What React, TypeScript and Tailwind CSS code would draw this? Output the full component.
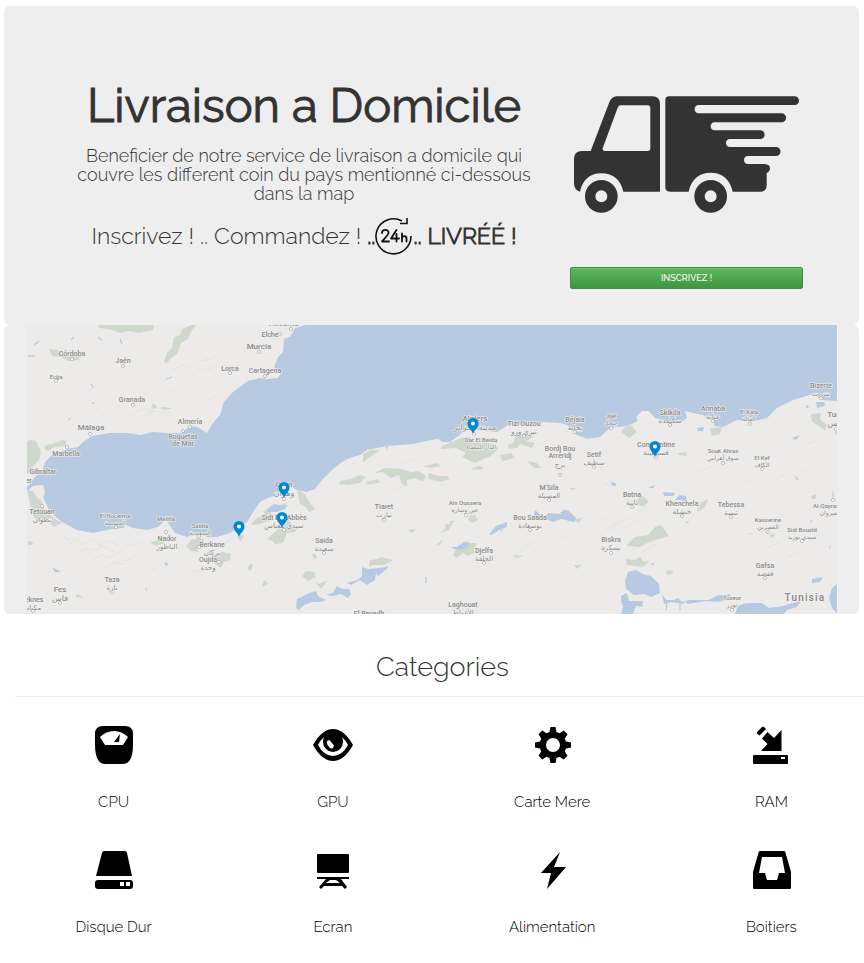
import type { ReactNode } from "react";

const MAP_FONT = "font-['Roboto','DejaVu_Sans',sans-serif]";

type Place = { x: number; y: number; name: string; ar?: string; size?: number; dot?: [number, number]; second?: string };

const places: Place[] = [
  { x: 284, y: 326, name: "Alicante", size: 8, dot: [291, 329] },
  { x: 270, y: 337, name: "Elche", dot: [280, 334] },
  { x: 259, y: 349, name: "Murcia", size: 8, dot: [259, 352] },
  { x: 72, y: 356, name: "Córdoba", dot: [72, 359] },
  { x: 123, y: 363, name: "Jaén", dot: [123, 366] },
  { x: 56, y: 379, name: "Ecija", size: 6, dot: [56, 381] },
  { x: 230, y: 371, name: "Lorca", dot: [230, 373] },
  { x: 265, y: 373, name: "Cartagena", dot: [265, 376] },
  { x: 132, y: 402, name: "Granada", dot: [133, 405] },
  { x: 91, y: 430, name: "Málaga", size: 8, dot: [90, 434] },
  { x: 190, y: 424, name: "Almería", dot: [190, 427] },
  { x: 183, y: 439, name: "Roquetas", second: "de Mar", dot: [183, 431] },
  { x: 66, y: 456, name: "Marbella", dot: [67, 447] },
  { x: 43, y: 474, name: "Gibraltar" },
  { x: 20, y: 483, name: "Tangier" },
  { x: 42, y: 514, name: "Tetouan", ar: "تطوان", dot: [42, 506] },
  { x: 115, y: 518, name: "El Hoceima", ar: "الحسيمة", size: 6, dot: [116, 527] },
  { x: 166, y: 521, name: "Melilla", size: 6, dot: [166, 532] },
  { x: 167, y: 541, name: "Nador", ar: "الناظور" },
  { x: 200, y: 528, name: "Saidia", ar: "السعيدية", size: 6, dot: [199, 536] },
  { x: 212, y: 547, name: "Berkane", ar: "بركان", dot: [199, 547] },
  { x: 208, y: 562, name: "Oujda", ar: "وجدة", dot: [219, 562] },
  { x: 112, y: 582, name: "Taza", ar: "تازة", dot: [112, 592] },
  { x: 60, y: 592, name: "Fes", ar: "فاس", size: 8, dot: [60, 603] },
  { x: 31, y: 602, name: "Meknes", ar: "مكناس", dot: [33, 611] },
  { x: 284, y: 487, name: "Oran", ar: "وهران", size: 8, dot: [284, 499] },
  { x: 284, y: 520, name: "Sidi Bel Abbès", ar: "سيدي بلعباس", dot: [284, 530] },
  { x: 384, y: 509, name: "Tiaret", ar: "تيارت", dot: [384, 520] },
  { x: 324, y: 543, name: "Saida", ar: "سعيدة", dot: [324, 553] },
  { x: 465, y: 505, name: "Ain Oussera", ar: "عين وسارة", size: 6, dot: [466, 515] },
  { x: 530, y: 520, name: "Bou Saada", ar: "بوسعادة", dot: [530, 530] },
  { x: 484, y: 553, name: "Djelfa", ar: "الجلفة", dot: [484, 563] },
  { x: 463, y: 607, name: "Laghouat", ar: "الأغواط" },
  { x: 369, y: 616, name: "El Bayadh" },
  { x: 475, y: 421, name: "Algiers", ar: "مدينة الجزائر", size: 8, dot: [474, 434] },
  { x: 481, y: 442, name: "Dar El Beida", ar: "الدار البيضاء", size: 6 },
  { x: 524, y: 426, name: "Tizi Ouzou", ar: "تيزي وزو", dot: [524, 436] },
  { x: 575, y: 422, name: "Béjaïa", ar: "بجاية", dot: [575, 432] },
  { x: 560, y: 451, name: "Bordj Bou", second: "Arreridj", dot: [560, 475] },
  { x: 560, y: 467, name: "برج" },
  { x: 594, y: 457, name: "Setif", ar: "سطيف", dot: [594, 467] },
  { x: 611, y: 418, name: "Jijel", ar: "جيجل", size: 6, dot: [611, 428] },
  { x: 670, y: 415, name: "Skikda", ar: "سكيكدة", dot: [670, 425] },
  { x: 713, y: 411, name: "Annaba", ar: "عنابة", dot: [713, 421] },
  { x: 749, y: 414, name: "El Kala", ar: "القالة", size: 6, dot: [750, 424] },
  { x: 656, y: 447, name: "Constantine", ar: "قسنطينة", dot: [656, 457] },
  { x: 723, y: 453, name: "Souk Ahras", ar: "سوق أهراس", size: 6, dot: [723, 463] },
  { x: 762, y: 460, name: "El Kef", ar: "الكاف", size: 6, dot: [762, 469] },
  { x: 821, y: 388, name: "Bizerte", ar: "بنزرت", dot: [821, 398] },
  { x: 837, y: 417, name: "Tunis", ar: "تونس", size: 8, dot: [836, 429] },
  { x: 549, y: 490, name: "M'Sila", ar: "المسيلة", dot: [549, 500] },
  { x: 632, y: 497, name: "Batna", ar: "باتنة", dot: [632, 507] },
  { x: 682, y: 506, name: "Khenchela", ar: "خنشلة", dot: [682, 516] },
  { x: 731, y: 507, name: "Tebessa", ar: "تبسة", dot: [731, 517] },
  { x: 768, y: 522, name: "Kasserine", ar: "القصرين", size: 6, dot: [768, 532] },
  { x: 830, y: 508, name: "Al-Qayrawan", ar: "القيروان", size: 6, dot: [833, 500] },
  { x: 802, y: 532, name: "Sidi Bouzid", ar: "سيدي بوزيد", size: 6, dot: [802, 541] },
  { x: 611, y: 542, name: "Biskra", ar: "بسكرة", dot: [611, 553] },
  { x: 765, y: 568, name: "Gafsa", ar: "قفصة", dot: [765, 578] },
  { x: 732, y: 600, name: "Tozeur", ar: "توزر", size: 6, dot: [732, 610] },
];

const pins: [number, number][] = [
  [473, 434],
  [655, 457],
  [284, 498],
  [282, 528],
  [239, 537],
];

function PlaceLabel({ place }: { place: Place }) {
  const size = place.size ?? 7;
  return (
    <g fontSize={size} textAnchor="middle" stroke="#f0f0ef" strokeWidth="1.2" paintOrder="stroke" fill="#8a8a8a">
      <text x={place.x} y={place.y}>{place.name}</text>
      {place.second && <text x={place.x} y={place.y + size}>{place.second}</text>}
      {place.ar && <text x={place.x} y={place.y + size + 1}>{place.ar}</text>}
      {place.dot && <circle cx={place.dot[0]} cy={place.dot[1]} r="1.5" fill="#f3f3f2" stroke="#8a8a8a" strokeWidth="0.8" />}
    </g>
  );
}

function DeliveryMap() {
  return (
    <svg viewBox="27 325 810 289" className={`block h-auto w-full font-medium ${MAP_FONT}`} role="img" aria-label="Carte des villes desservies">
      <rect x="27" y="325" width="810" height="289" fill="#b8cae1" />
      <path
        fill="#ecebea"
        d="M27 325H305L295 328 290 337 284 339 283 352 278 357 274 367 281 373 278 378 267 379 260 378 248 381 241 386 233 392 224 402 220 415 213 423 207 433 202 430 198 427 190 426 182 433 168 433 153 432 140 435 127 433 110 433 92 436 83 442 78 447 67 449 52 455 45 462 43 469 35 477 27 487Z"
      />
      <path
        fill="#ecebea"
        d="M27 491L33 486 43 485 45 493 43 497 50 512 62 522 77 530 93 533 102 531 113 529 123 528 126 525 133 528 147 530 158 527 163 522 166 515 168 523 175 533 187 537 198 533 207 537 217 537 230 533 247 522 253 512 260 502 268 498 277 495 283 487 290 486 297 490 307 492 315 489 322 480 333 469 342 462 350 458 360 455 367 450 387 446 413 444 426 441 438 439 443 442 450 442 462 433 470 428 480 430 497 432 508 425 527 424 543 422 560 423 567 425 577 435 587 439 600 437 610 428 627 426 638 421 636 417 642 411 649 411 655 418 667 422 680 423 687 418 685 411 693 413 703 415 712 420 715 426 723 427 737 420 750 422 767 418 777 408 793 400 813 394 823 400 837 401V614H27Z"
      />
      <g fill="none" stroke="#dfdfdd" strokeWidth="0.8">
        <path d="M130 418l8-7 7-2 6 2M138 422l9-8 8-3M148 418l5-7 6 1 8-3M155 421l7-8 10-2M165 395l9-5M170 372l12-7 6 2M192 375l9-6 7 1 9-5M200 361l10-2 9-5M147 362l7-6M77 405l6-5M87 393l8-7M100 417l6-4M204 405l7-7 5-2" />
        <path d="M68 545l8-5 8 4 7-5 9 6 9-4 10 5M77 553l9-5 8 3 8-5 12 6M62 533l6 7 7-2M92 561l9-6 9 3 13-8M103 569l12-7 8 2M126 540l5 6 11-4M139 552l-8 7-9 2M90 590l7-5M150 571l7-4M190 573l10-3M222 545l13-8" />
        <path d="M597 523l9-5M600 534l18-12M611 529l14-9M617 522l13-6M625 528l12-8M637 512l11-6M633 550l26-12M642 552l15-8M602 486l12-5M615 440l11-7M557 541l9-5M519 552l16-11M536 445l14-6M395 489l15-5M402 463l13-4M698 472l14-6M776 479l9-5M800 473l7-5M767 548l14-6M787 558l11-6M742 479l7 5M805 445l13-5" />
      </g>
      <g fill="#d0d8cd">
        <path d="M98 325h56l-1 5-14 3-10-2-8 2-13-4-9-1zM174 337l6-2 2-6 10-4h5l-5 5-4 9-7 4-4 11-6 4-4 5-3-1 3-9 5-5zM49 349l9 1 4 3 12 1 8 2-4 4-9 1-8-4-9-1zM28 355h7v2h-7zM152 404l4 1 1 3-6 1zM162 407l10 1-4 2-7-1z" />
        <path d="M30 440l6 1 5 11-2 8-6 6-2 6-4 2v-32zM44 446l8-2 10-4 5 1-2 5-11 1-5 4-4-2zM27 490l6 1 4 7 5 3 3 9 9 8 8 5-8 4-6-5h-12l-4-9zM28 541l6 1-3 3h-3zM77 594l7 4-8-1zM150 542l12-2 3 3-9 3zM186 546l5-6 7-2 6 1-2 7-5 2 2 4-8-1zM213 555l10-3 8 2-1 6-6 2-3 6-6-4zM251 524l7-7 7-1-2-5 11-5 2 3-8 6 4 5-12 4-7 1zM267 539l10-9 9-12 6 6 6 3-3 5-8 1-4 10-8 1-2-3zM273 508l12-5 3 3-7 4zM297 490l8 4 4 8 6 7-6 3-3-5-6-3zM239 534l5 2-3 5-4-3zM247 568l4-5 2 3-3 5zM264 580l5 4-7 3zM131 591l3-2M145 587l3 2-2 2z" />
        <path d="M363 454l8-4 9 0-7 5-7 5-3 3zM384 446l5-1-2 5zM423 466l14-3 4 3-11 2zM442 446l9-4 10-4 8-1 6 2-2 3 10-1 11 4 5 3-8 8-5 2-11 5-13-6 4-4-10-5-15 1zM508 445l6-3 2-9 12 1 6 3-8 4 9 2-3 5-12-4-3 4-8 1zM527 461l10 2 4 5-7 0zM500 455l11-2 4 5-13 3zM340 481l11-2 9-4 6 2-6 6-12 2-9-1zM365 483l12-4 4 3-12 3zM376 472l9-4 17 1 9 3 7-1 8 5-3 6-8-4-8 2 0 6-5-2-3-9-8 3-8-6-7 1zM428 473l10 3 9 0 3 3-9 3-12-3zM470 469l8-3 6 1-3 3zM469 516l6-1 3 5-6 3-4-3zM440 533l5-4 1-5 4 0-1-3 5-1-5 10-6 2zM435 546l8-7-3 6zM408 530l8-1-4 4zM453 555l4-8 10-6 3 2 7 0-3 6 0 4-7 3-4-3-6 5zM499 530l6-1-4 3zM513 555l11 1-8 2zM314 559l-3-5 5 0 1 4zM302 576l4-5 8 1 2 5-8 4zM315 581l4 3 9-4-7 9zM370 560l8-1 3-2 12 3-9 5-11 0-4 2z" />
        <path d="M621 432l4-5 6-2 6 7-8 6zM678 453l8-1 1 4-8-1zM710 428l12-1-2 7-8 2zM811 414l10-1-1 6 7 6-2 5-13-8zM836 427h1v7h-2zM563 514l11 1-6 3zM575 519l8-1-5 5zM637 500l5-5 7 7-6 4-8-1zM697 509l5-7 6-3-3 8-7 5zM627 545l8-8 13-2 8-9 5-1 8 11-20 6-10 5-12-1zM626 559l9 1 5-3 4 5 6-1-7 6-8-1-8-1zM665 571l6-1 3 3-6 2zM574 565l8 0-5 4zM685 522l4-1-1 3zM769 535l7-2-4 5zM794 475l5 4-2 2zM811 496l5-2 0 5-4 0zM650 564l5-2-2 4zM570 488l6 0-4 2zM747 533l7 0-5 1zM832 490l3 6-3 2z" />
      </g>
      <g fill="#b8cae1">
        <path d="M268 508l6-4 12 2-1 3-8 3-10 0zM489 534l7-8 11-4v5l-8 3-7 5zM451 547l6 0 7-5 5 1-2 5-8 2-4-1zM534 516l1-6 8 7 6-4 12 1 3-5 8 6-1 6-10-2-8 3-9-4zM296 608l1-9 10-5 9-3 2 5 8 4-6 2-8 0-8 3-5 5zM325 595l8-2 4-7 5 3 7 0 2 5-3 4-7-4-8 2zM347 583l10-3 5-4 0-9 6 2 10-1 9-1-6 5-5 1-1 7-8 5-7-5-9 5zM376 574l11-8 1 2-10 8z" />
        <path d="M628 572l8-2 7 4 8 2 8 8 1 9-9 4-6-3-11 1-8-6-1-8zM621 596l6-3 2 8 14 0-1 6-6-1-3 8h-12l2-8-2-5zM662 594l4 6 8 0 4-2 4 4 7-2 20 0 9-5 7 0 5-1-1 5-11 3-12-1-18 3-3-2-2 2-12-2-7 2zM735 614l3-8 8-3 16 0 7 5 14-2 6-2 12-3-4 6-10 3-3 4zM837 584v30l-5-6-3-10 3-10zM812 579l11-2-3 5-8 1zM675 500l4-5 7 1 1 6-6-2zM663 492l12 1-2 3h-9zM560 512l8-2 8 8-1 4-7-1zM697 428l7-1-1 4-5 0zM806 405l4 2-4 1zM816 402l8 0 1 4-8 2zM611 482l5 1 0 3-4 0zM648 488l7-3-2 3zM792 438l8-3-4 5zM816 434l2-4zM829 548l2-4-1 5zM52 567l9 5-6 0zM164 562l5 2-3 2zM92 402l3 2-3 0zM68 419l4-2-3 3z" />
      </g>
      <path d="M122 344l-2-5M34 345l5-4M71 340l3-3M98 337l4 3M166 379l6-2M91 384l2 3M426 583v-6M680 611v-7M667 603l-1 7M811 520v3" stroke="#b8cae1" strokeWidth="1.2" />
      {places.map((place) => <PlaceLabel key={place.name} place={place} />)}
      <text x="805" y="601" fontSize="10" letterSpacing="1.2" textAnchor="middle" fill="#848484" stroke="#f3f3f2" strokeWidth="1.2" paintOrder="stroke">Tunisia</text>
      {pins.map(([x, y]) => (
        <g key={`${x}-${y}`} transform={`translate(${x} ${y})`}>
          <path d="M0 0C-1-4-5.500-6-5.500-10.500a5.500 5.500 0 0 1 11 0C5.500-6 1-4 0 0Z" fill="#0288d1" />
          <circle cx="0" cy="-10.500" r="2" fill="#fff" />
        </g>
      ))}
    </svg>
  );
}

function Truck() {
  return (
    <svg viewBox="72 49 678 351" className="block h-auto w-[226px] max-w-full" role="img" aria-label="Camion de livraison">
      <g fill="#333">
        <path fillRule="evenodd" d="M200 50H307Q330 50 330 74V336H220C212 300 190 281 154 281C119 281 97 302 90 336Q72 331 72 310V237Q72 214 96 214H122L177 70Q184 50 200 50ZM212 77Q206 77 203 84L158 206Q157 214 165 214H293Q301 214 301 206V85Q301 77 293 77Z" />
        <path d="M356 50H734a13 13 0 0 1 0 26H446C430 76 430 101 446 101H695a13 13 0 0 1 0 27H494C478 128 478 152 494 152H631a13 13 0 0 1 0 26H540C524 178 524 202 540 202H678a13 13 0 0 1 0 27H594C578 229 578 253 594 253H640Q660 253 660 266Q660 276 650 280V317Q650 336 632 336H548C541 300 517 279 482 279C447 279 423 300 416 336H360Q346 336 346 323V61Q346 50 356 50Z" />
        <path fillRule="evenodd" d="M154 301a49 49 0 1 1 0 98a49 49 0 0 1 0-98ZM154 332a18 18 0 1 0 0 36a18 18 0 0 0 0-36Z" />
        <path fillRule="evenodd" d="M482 301a49 49 0 1 1 0 98a49 49 0 0 1 0-98ZM482 332a18 18 0 1 0 0 36a18 18 0 0 0 0-36Z" />
      </g>
    </svg>
  );
}

function Clock24() {
  return (
    <svg viewBox="0 0 38 38" className="h-[38px] w-[38px] shrink-0" role="img" aria-label="24h">
      <g fill="none" stroke="#111" strokeWidth="1.6">
        <path d="M27 4A17.500 17.500 0 1 0 36 19" />
        <path d="M25 6.500H32V1" />
      </g>
      <g fill="none" stroke="#111" strokeWidth="1.800" strokeLinecap="round" strokeLinejoin="round">
        <path d="M7 16C7 11.500 14 12 13.500 16C13.300 18.500 9 21.500 7 24.500H14" />
        <path d="M21.500 13L16 21.500H24M21.500 17V24.500" />
        <path d="M27 16.500V24.500M27 21C28 18.500 31.500 18.500 31.500 21.500V24.500" />
      </g>
    </svg>
  );
}

const scaleIcon = (
  <path fillRule="evenodd" d="M8 0H30Q38 0 38 8V18Q38 38 28 38H10Q0 38 0 18V8Q0 0 8 0ZM5 11L10 19H28L33 11Q27 5 19 5Q11 5 5 11ZM25 8L24 16H19Z" />
);

const eyeIcon = (
  <>
    <path fillRule="evenodd" d="M-1 19Q8 3 19 3Q30 3 39 19Q30 35 19 35Q8 35-1 19ZM4 19Q10 30 19 30Q28 30 34 19Q32 14.500 28 11Q29 13 29 16A10 10 0 0 1 9 16Q9 13 10 11Q6 14.500 4 19Z" />
    <path d="M15.500 14L20 19.500Q19 24 16 22Q12 18 13 15Z" fill="#fff" />
  </>
);

const cogIcon = (
  <path
    fillRule="evenodd"
    d="M17.500 1H22.500L23.500 6L26.500 7.200L30.800 4.500L34.500 8.200L31.800 12.500L33 15.500L38 16.500V21.500L33 22.500L31.800 25.500L34.500 29.800L30.800 33.500L26.500 30.800L23.500 32L22.500 37H17.500L16.500 32L13.500 30.800L9.200 33.500L5.500 29.800L8.200 25.500L7 22.500L2 21.500V16.500L7 15.500L8.200 12.500L5.500 8.200L9.200 4.500L13.500 7.200L16.500 6ZM20 12A7 7 0 1 0 20 26A7 7 0 0 0 20 12Z"
  />
);

const saveIcon = (
  <>
    <path d="M5 6L10 1Q11 0.500 12 1L14 3L7.500 9.500L5.500 8Q4.500 7 5 6ZM15.500 6L22 12L29.500 4V25H9L15.500 18L10 12.500Z" />
    <path fillRule="evenodd" d="M2 29H35Q36 29 36 30V37Q36 38 35 38H2Q1 38 1 37V30Q1 29 2 29ZM29 31V33H33V31Z" />
  </>
);

const driveIcon = (
  <path fillRule="evenodd" d="M9 0H30Q31.500 0 32 2L37 25H1L7 2Q7.500 0 9 0ZM3 29H35Q38 29 38 32V35Q38 38 35 38H3Q0 38 0 35V32Q0 29 3 29ZM25 31V35H29V31ZM31 31V35H35V31Z" />
);

const screenIcon = (
  <path fillRule="evenodd" d="M4 3H34Q35 3 35 4V21Q35 22 34 22H4Q3 22 3 21V4Q3 3 4 3ZM3 26H35V28H27L33 36L31 38L28 35H10L7 38L5 36L12 28H3ZM16 29L12 32H26L22 29Z" />
);

const flashIcon = <path d="M27 1L21 16H33L14 38L18 22H8Z" />;

const inboxIcon = (
  <path fillRule="evenodd" d="M8 0H32Q33 0 33.300 1L39 21V37Q39 38 38 38H2Q1 38 1 37V21L6.700 1Q7 0 8 0ZM10 6L7 22H13L15 29H25L27 22H33L30 6Z" />
);

const categories: { label: string; icon: ReactNode }[] = [
  { label: "CPU", icon: scaleIcon },
  { label: "GPU", icon: eyeIcon },
  { label: "Carte Mere", icon: cogIcon },
  { label: "RAM", icon: saveIcon },
  { label: "Disque Dur", icon: driveIcon },
  { label: "Ecran", icon: screenIcon },
  { label: "Alimentation", icon: flashIcon },
  { label: "Boitiers", icon: inboxIcon },
];

export default function App() {
  return (
    <main className="min-h-screen overflow-hidden bg-white pt-[6px] font-['Raleway','Lato',sans-serif] font-light text-[#333]">
      <section className="mr-[5px] ml-1 grid grid-cols-[2fr_1fr] gap-[33px] rounded-md bg-[#eee] pr-14 pb-9 pl-[67px]">
        <div className="min-w-0 pt-[73px] text-center">
          <h1 className="text-[47px] leading-[53px] font-normal whitespace-nowrap [-webkit-text-stroke:1px_#333]">Livraison a Domicile</h1>
          <p className="mt-[14px] text-[18px] leading-[19px]">
            Beneficier de notre service de livraison a domicile qui couvre les different coin du pays mentionné ci-dessous dans la map
          </p>
          <p className="mt-[14px] flex items-center justify-center text-[23px] whitespace-nowrap">
            <span>Inscrivez ! .. Commandez !&nbsp;</span>
            <strong className="flex items-center font-light [-webkit-text-stroke:1px_#333]">
              <span>..</span>
              <Clock24 />
              <span>.. LIVRÉÉ !</span>
            </strong>
          </p>
        </div>
        <div className="flex min-w-0 flex-col items-center gap-[54px] pt-[90px]">
          <Truck />
          <button
            type="button"
            className="h-[22px] w-full rounded-[2px] border border-[#3e8f3e] bg-linear-to-b from-[#5cb85c] to-[#419641] text-[9px] leading-[18px] font-medium text-white shadow-[inset_0_1px_0_rgba(255,255,255,0.15)]"
          >
            INSCRIVEZ !
          </button>
        </div>
      </section>

      <section className="mr-[5px] ml-1 rounded-md bg-[#eee] pr-[22px] pl-[23px]">
        <DeliveryMap />
      </section>

      <section className="-mr-[17px] ml-1 pt-[38px]">
        <h2 className="text-center text-[27px] leading-[30px]">Categories</h2>
        <hr className="mt-[14px] ml-[11px] border-[#eee]" />
        <div className="mt-[29px] grid grid-cols-4 gap-y-[39px]">
          {categories.map(({ label, icon }) => (
            <a key={label} href="#" className="flex flex-col items-center gap-7 text-[15px] leading-5 text-black">
              <svg viewBox="0 0 38 38" className="h-[38px] w-[38px] overflow-visible" fill="currentColor" aria-hidden="true">
                {icon}
              </svg>
              <span>{label}</span>
            </a>
          ))}
        </div>
      </section>
    </main>
  );
}
